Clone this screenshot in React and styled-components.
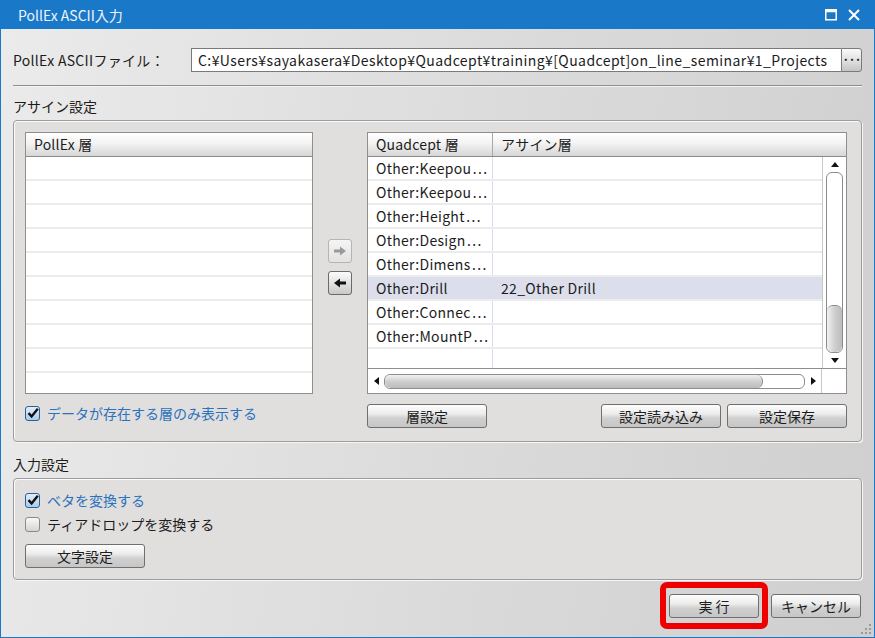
import React from 'react';
import styled, { createGlobalStyle } from 'styled-components';

const GlobalStyle = createGlobalStyle`
  html, body {
    margin: 0;
    padding: 0;
  }
  body {
    font-family: "Noto Sans CJK JP", "Noto Sans", sans-serif;
    font-size: 14px;
    color: #1c1c1c;
  }
`;

const rightRows = [
  { name: 'Other:Keepou', assign: '' },
  { name: 'Other:Keepou', assign: '' },
  { name: 'Other:Height', assign: '' },
  { name: 'Other:Design', assign: '' },
  { name: 'Other:Dimens', assign: '' },
  { name: 'Other:Drill', assign: '22_Other Drill', selected: true, full: true },
  { name: 'Other:Connec', assign: '' },
  { name: 'Other:MountP', assign: '' }
];

const CheckMark = () => (
  <svg width="12" height="12" viewBox="0 0 12 12">
    <path d="M1.5 6.2 L4.6 9.4 L10.8 1.8" stroke="#111" strokeWidth="2.4" fill="none" strokeLinejoin="miter" />
  </svg>
);

const Arrow = ({ dir, disabled }) => (
  <svg width="14" height="10" viewBox="0 0 14 10">
    {dir === 'right' ? (
      <path d="M1 3.5 H7 V0.5 L13 5 L7 9.5 V6.5 H1 Z" fill={disabled ? '#9a9a9a' : '#111'} />
    ) : (
      <path d="M13 3.5 H7 V0.5 L1 5 L7 9.5 V6.5 H13 Z" fill={disabled ? '#9a9a9a' : '#111'} />
    )}
  </svg>
);

const App = () => {
  return (
    <>
      <GlobalStyle />
      <Window>
        <TitleBar>
          <TitleText>PollEx ASCII入力</TitleText>
          <TitleIcons>
            <svg width="12" height="12" viewBox="0 0 12 12">
              <rect x="0.75" y="0.75" width="10.5" height="10" fill="none" stroke="#fff" strokeWidth="1.5" />
              <rect x="0.75" y="0.75" width="10.5" height="2.5" fill="#fff" />
            </svg>
            <svg width="12" height="12" viewBox="0 0 12 12">
              <path d="M1 1 L11 11 M11 1 L1 11" stroke="#fff" strokeWidth="2" />
            </svg>
          </TitleIcons>
        </TitleBar>
        <Body>
          <FileRow>
            <FileLabel>PollEx ASCIIファイル：</FileLabel>
            <PathBox>C:¥Users¥sayakasera¥Desktop¥Quadcept¥training¥[Quadcept]on_line_seminar¥1_Projects</PathBox>
            <BrowseButton>···</BrowseButton>
          </FileRow>
          <Separator />
          <SectionLabel height="34px">アサイン設定</SectionLabel>
          <AssignGroup>
            <ListBox>
              <HeaderRow>
                <HeaderCell>PollEx 層</HeaderCell>
              </HeaderRow>
              {Array.from({ length: 10 }).map((_, i) => (
                <EmptyRow key={i} />
              ))}
            </ListBox>
            <ArrowColumn>
              <ArrowButton disabled>
                <Arrow dir="right" disabled />
              </ArrowButton>
              <ArrowButton>
                <Arrow dir="left" />
              </ArrowButton>
            </ArrowColumn>
            <TableBox>
              <TableHeader>
                <HeaderCell width="125px" divider>
                  Quadcept 層
                </HeaderCell>
                <HeaderCell>アサイン層</HeaderCell>
              </TableHeader>
              <TableMain>
                <TableRows>
                  {rightRows.map((row, i) => (
                    <TableRow key={i} selected={row.selected}>
                      <Cell width="125px" divider>
                        {row.name}
                        {!row.full && <Dots>⋯</Dots>}
                      </Cell>
                      <Cell>{row.assign}</Cell>
                    </TableRow>
                  ))}
                  <FillerRow>
                    <Cell width="125px" divider />
                  </FillerRow>
                </TableRows>
                <VScroll>
                  <ScrollArrow>
                    <Triangle dir="up" />
                  </ScrollArrow>
                  <VTrack>
                    <VThumb />
                  </VTrack>
                  <ScrollArrow>
                    <Triangle dir="down" />
                  </ScrollArrow>
                </VScroll>
              </TableMain>
              <HScrollRow>
                <HScroll>
                  <ScrollArrowH>
                    <Triangle dir="left" />
                  </ScrollArrowH>
                  <HTrack>
                    <HThumb />
                  </HTrack>
                  <ScrollArrowH>
                    <Triangle dir="right" />
                  </ScrollArrowH>
                </HScroll>
                <Corner />
              </HScrollRow>
            </TableBox>
            <CheckRow top="7px">
              <CheckBox checked>
                <CheckMark />
              </CheckBox>
              <CheckText checked>データが存在する層のみ表示する</CheckText>
            </CheckRow>
            <span />
            <TableButtons>
              <Button width="120px">層設定</Button>
              <RightButtons>
                <Button width="120px">設定読み込み</Button>
                <Button width="120px">設定保存</Button>
              </RightButtons>
            </TableButtons>
          </AssignGroup>
          <SectionLabel height="36px">入力設定</SectionLabel>
          <InputGroup>
            <CheckRow>
              <CheckBox checked>
                <CheckMark />
              </CheckBox>
              <CheckText checked>ベタを変換する</CheckText>
            </CheckRow>
            <CheckRow>
              <CheckBox />
              <CheckText>ティアドロップを変換する</CheckText>
            </CheckRow>
            <Button width="120px">文字設定</Button>
          </InputGroup>
          <Footer>
            <Highlighted>
              <Button width="90px">実 行</Button>
              <RedFrame />
            </Highlighted>
            <Button width="90px">キャンセル</Button>
          </Footer>
        </Body>
        <Grip>
          <svg width="10" height="10" viewBox="0 0 10 10">
            {[
              [8, 0],
              [8, 4],
              [4, 4],
              [8, 8],
              [4, 8],
              [0, 8]
            ].map(([x, y], i) => (
              <rect key={i} x={x} y={y} width="2" height="2" fill="#9a9a9a" />
            ))}
          </svg>
        </Grip>
      </Window>
    </>
  );
};

export default App;

const Window = styled.div`
  position: relative;
  width: 875px;
  height: 638px;
  box-sizing: border-box;
  border: 1px solid #1a78c8;
  border-top: none;
  display: flex;
  flex-direction: column;
  background: linear-gradient(100deg, #ebebeb 0%, #dcdcdc 50%, #cfcfcf 100%);
  overflow: hidden;
`;

const TitleBar = styled.div`
  height: 29px;
  margin: 0 -1px;
  background: #1a78c8;
  display: flex;
  align-items: center;
  justify-content: space-between;
  padding: 0 15px 0 18px;
  flex-shrink: 0;
`;

const TitleText = styled.div`
  color: #eef4fa;
  font-size: 14px;
  padding-top: 1px;
`;

const TitleIcons = styled.div`
  display: flex;
  gap: 11px;
  align-items: center;
`;

const Body = styled.div`
  padding: 0 12px 0 12px;
  display: flex;
  flex-direction: column;
`;

const FileRow = styled.div`
  margin-top: 19px;
  display: flex;
  align-items: center;
  height: 24px;
`;

const FileLabel = styled.div`
  width: 178px;
  font-size: 14px;
  letter-spacing: 0.3px;
`;

const PathBox = styled.div`
  flex: 1;
  height: 24px;
  box-sizing: border-box;
  background: #fff;
  border: 1px solid #7a7a7a;
  border-right: none;
  padding-left: 6px;
  line-height: 22px;
  font-size: 14px;
  letter-spacing: 0.42px;
  white-space: nowrap;
  overflow: hidden;
`;

const BrowseButton = styled.div`
  width: 21px;
  height: 24px;
  box-sizing: border-box;
  border: 1px solid #7a7a7a;
  border-radius: 0 3px 3px 0;
  background: linear-gradient(#fafafa, #dcdcdc 60%, #c4c4c4);
  display: flex;
  align-items: center;
  justify-content: center;
  font-size: 12px;
  font-weight: bold;
  letter-spacing: -1px;
  line-height: 1;
  padding-bottom: 2px;
`;

const Separator = styled.div`
  margin-top: 13px;
  height: 1px;
  background: #8e8e8e;
  box-shadow: 0 1px 0 #f4f4f4;
`;

const SectionLabel = styled.div`
  height: ${(p) => p.height};
  display: flex;
  align-items: flex-end;
  padding-bottom: 4px;
  box-sizing: border-box;
  font-size: 14px;
`;

const Group = styled.div`
  background: #e1dfde;
  border: 1px solid #9c9c9c;
  border-radius: 4px;
  box-shadow: inset 1px 1px 0 #fbfbfb, 1px 1px 0 #f6f6f6;
`;

const AssignGroup = styled(Group)`
  height: 322px;
  box-sizing: border-box;
  padding: 11px 13px 0 11px;
  display: grid;
  grid-template-columns: 288px 54px 480px;
  grid-template-rows: 262px 46px;
  align-items: start;
`;

const ListBox = styled.div`
  align-self: stretch;
  background: #fff;
  border: 1px solid #8e8e8e;
  overflow: hidden;
`;

const HeaderRow = styled.div`
  display: flex;
  height: 23px;
  border-bottom: 1px solid #8a8a8a;
  background: linear-gradient(#ffffff, #f3f3f3 45%, #d6d6d6);
`;

const HeaderCell = styled.div`
  width: ${(p) => p.width || 'auto'};
  flex: ${(p) => (p.width ? 'none' : '1')};
  box-sizing: border-box;
  padding-left: 8px;
  line-height: 23px;
  font-size: 14px;
  letter-spacing: 0.2px;
  border-right: ${(p) => (p.divider ? '1px solid #a8a8a8' : 'none')};
`;

const EmptyRow = styled.div`
  height: 22px;
  border-bottom: 2px solid #ececec;
`;

const ArrowColumn = styled.div`
  align-self: center;
  display: flex;
  flex-direction: column;
  align-items: center;
  gap: 8px;
  padding-top: 8px;
`;

const ArrowButton = styled.div`
  width: 24px;
  height: 24px;
  box-sizing: border-box;
  border: 1px solid ${(p) => (p.disabled ? '#b4b4b4' : '#6a6a6a')};
  border-radius: 3px;
  background: ${(p) =>
    p.disabled ? 'linear-gradient(#f4f4f4, #e2e2e2)' : 'linear-gradient(#fbfbfb, #e0e0e0 55%, #c8c8c8)'};
  display: flex;
  align-items: center;
  justify-content: center;
`;

const TableBox = styled.div`
  align-self: stretch;
  border: 1px solid #8e8e8e;
  background: #fff;
  display: flex;
  flex-direction: column;
  overflow: hidden;
`;

const TableHeader = styled(HeaderRow)``;

const TableMain = styled.div`
  flex: 1;
  display: flex;
  min-height: 0;
`;

const TableRows = styled.div`
  flex: 1;
  display: flex;
  flex-direction: column;
`;

const TableRow = styled.div`
  display: flex;
  height: 24px;
  box-sizing: border-box;
  border-bottom: 2px solid #ececec;
  background: ${(p) => (p.selected ? '#dcdeec' : '#fff')};
`;

const FillerRow = styled.div`
  flex: 1;
  display: flex;
`;

const Cell = styled.div`
  width: ${(p) => p.width || 'auto'};
  flex: ${(p) => (p.width ? 'none' : '1')};
  box-sizing: border-box;
  padding-left: 8px;
  line-height: 22px;
  font-size: 14px;
  letter-spacing: 0.3px;
  color: #1c1c1c;
  white-space: nowrap;
  overflow: hidden;
  border-right: ${(p) => (p.divider ? '1px solid #dcdcec' : 'none')};
`;

const Dots = styled.span`
  font-family: "Noto Sans CJK JP", sans-serif;
  letter-spacing: 0;
  margin-left: 1px;
`;

const VScroll = styled.div`
  width: 24px;
  border-left: 1px solid #c8c8c8;
  display: flex;
  flex-direction: column;
  align-items: center;
  box-sizing: border-box;
`;

const ScrollArrow = styled.div`
  height: 15px;
  width: 100%;
  display: flex;
  align-items: center;
  justify-content: center;
`;

const Triangle = styled.div`
  width: 0;
  height: 0;
  border-style: solid;
  border-color: transparent;
  ${(p) =>
    p.dir === 'up'
      ? 'border-width: 0 4px 5px 4px; border-bottom-color: #111;'
      : p.dir === 'down'
      ? 'border-width: 5px 4px 0 4px; border-top-color: #111;'
      : p.dir === 'left'
      ? 'border-width: 4px 5px 4px 0; border-right-color: #111;'
      : 'border-width: 4px 0 4px 5px; border-left-color: #111;'}
`;

const VTrack = styled.div`
  flex: 1;
  width: 17px;
  box-sizing: border-box;
  border: 1px solid #8c8c8c;
  border-radius: 6px;
  display: flex;
  flex-direction: column;
  justify-content: flex-end;
  overflow: hidden;
`;

const VThumb = styled.div`
  height: 46px;
  background: linear-gradient(90deg, #f2f2f2, #cfcfcf 50%, #bcbcbc);
  border-top: 1px solid #8c8c8c;
  border-radius: 6px;
`;

const HScrollRow = styled.div`
  height: 24px;
  display: flex;
  border-top: 1px solid #8e8e8e;
  background: #fff;
`;

const HScroll = styled.div`
  flex: 1;
  display: flex;
  align-items: center;
`;

const ScrollArrowH = styled.div`
  width: 16px;
  height: 100%;
  display: flex;
  align-items: center;
  justify-content: center;
`;

const HTrack = styled.div`
  flex: 1;
  height: 15px;
  box-sizing: border-box;
  border: 1px solid #8c8c8c;
  border-radius: 6px;
  overflow: hidden;
  display: flex;
`;

const HThumb = styled.div`
  width: 90%;
  background: linear-gradient(#f2f2f2, #cfcfcf 50%, #bcbcbc);
  border-right: 1px solid #8c8c8c;
  border-radius: 6px;
`;

const Corner = styled.div`
  width: 24px;
  border-left: 1px solid #c8c8c8;
  background: #fff;
`;

const CheckRow = styled.div`
  display: flex;
  align-items: center;
  height: 24px;
  gap: 7px;
  margin-top: ${(p) => p.top || '0'};
`;

const CheckBox = styled.div`
  width: 15px;
  height: 15px;
  box-sizing: border-box;
  border-radius: 3px;
  border: 1px solid ${(p) => (p.checked ? '#2f5f92' : '#8a8a8a')};
  background: ${(p) =>
    p.checked ? 'linear-gradient(#e2eefa, #a9cbee)' : 'linear-gradient(#f8f8f8, #d4d4d4)'};
  display: flex;
  align-items: center;
  justify-content: center;
`;

const CheckText = styled.span`
  font-size: 14px;
  color: ${(p) => (p.checked ? '#2a72bd' : '#1c1c1c')};
`;

const TableButtons = styled.div`
  display: flex;
  justify-content: space-between;
  padding-top: 10px;
`;

const RightButtons = styled.div`
  display: flex;
  gap: 6px;
`;

const Button = styled.div`
  width: ${(p) => p.width};
  height: 24px;
  box-sizing: border-box;
  border: 1px solid #6f6f6f;
  border-radius: 3px;
  background: linear-gradient(#fdfdfd, #ececec 40%, #d0d0d0 60%, #c6c6c6);
  display: flex;
  align-items: center;
  justify-content: center;
  font-size: 14px;
  color: #1c1c1c;
`;

const InputGroup = styled(Group)`
  height: 102px;
  box-sizing: border-box;
  padding: 9px 11px 0;
  display: flex;
  flex-direction: column;
  & > ${Button} {
    margin-top: 8px;
  }
`;

const Footer = styled.div`
  margin-top: 14px;
  display: flex;
  justify-content: flex-end;
  gap: 12px;
  padding-right: 1px;
`;

const Highlighted = styled.div`
  position: relative;
`;

const RedFrame = styled.div`
  position: absolute;
  left: -9px;
  top: -12px;
  width: 108px;
  height: 47px;
  box-sizing: border-box;
  border: 6px solid #ee0000;
  border-radius: 7px;
`;

const Grip = styled.div`
  position: absolute;
  right: 3px;
  bottom: 3px;
  line-height: 0;
`;
